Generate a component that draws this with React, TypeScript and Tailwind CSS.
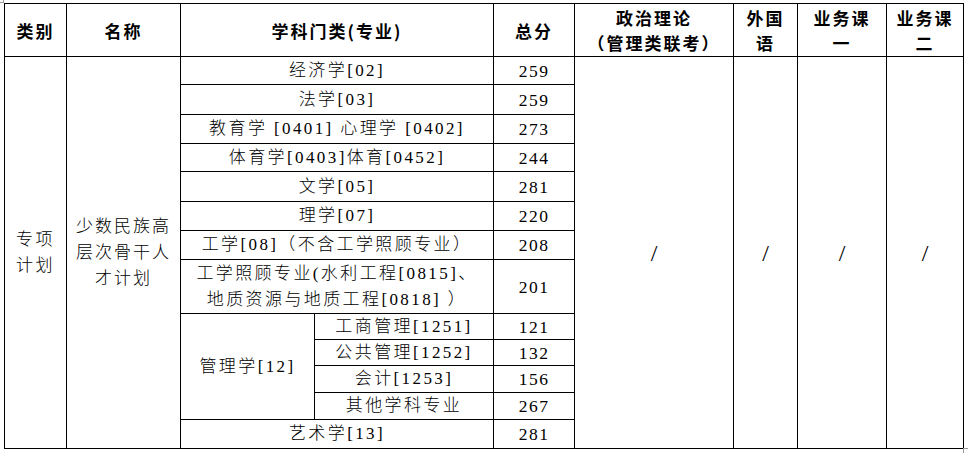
import React from "react";

const font = "font-[family-name:'Liberation_Serif','Noto_Sans_CJK_SC',serif]";

function Cell({
  area,
  children,
  className = "",
}: {
  area: string;
  children?: React.ReactNode;
  className?: string;
}) {
  return (
    <div
      className={`bg-white flex items-center justify-center text-center text-black ${className}`}
      style={{ gridArea: area }}
    >
      {children}
    </div>
  );
}

const subjects: { row: number; text: React.ReactNode; score: string }[] = [
  { row: 2, text: "经济学[02]", score: "259" },
  { row: 3, text: "法学[03]", score: "259" },
  { row: 4, text: "教育学 [0401] 心理学 [0402]", score: "273" },
  { row: 5, text: "体育学[0403]体育[0452]", score: "244" },
  { row: 6, text: "文学[05]", score: "281" },
  { row: 7, text: "理学[07]", score: "220" },
  { row: 8, text: "工学[08]（不含工学照顾专业）", score: "208" },
  {
    row: 9,
    text: (
      <>
        工学照顾专业(水利工程[0815]、
        <br />
        地质资源与地质工程[0818] ）
      </>
    ),
    score: "201",
  },
];

const mgmt: { row: number; text: string; score: string }[] = [
  { row: 10, text: "工商管理[1251]", score: "121" },
  { row: 11, text: "公共管理[1252]", score: "132" },
  { row: 12, text: "会计[1253]", score: "156" },
  { row: 13, text: "其他学科专业", score: "267" },
];

export default function App() {
  const head = "font-bold text-[17px] tracking-[2px] leading-[25px] font-[family-name:'Noto_Sans_CJK_SC',sans-serif]";
  const body = "font-light text-[17px] tracking-[2.4px] leading-[26px]";
  const num = "text-[17.5px] tracking-[1.5px] leading-[26px]";
  const slash = "font-[family-name:'Liberation_Serif',serif] text-[24px] text-[#777] leading-[26px]";
  return (
    <div className={`relative w-[968px] h-[453px] bg-white overflow-hidden pt-[3px] pl-[4px] ${font}`}>
      <div className="absolute left-0 top-[2px] w-[4px] h-px bg-[#999]" />
      <div className="absolute left-[3px] top-0 w-px h-[3px] bg-[#999]" />
      <div className="grid w-[960px] bg-black p-px gap-px grid-cols-[61px_113px_133px_178px_80px_158px_63px_88px_76px] grid-rows-[52px_27px_29px_28px_27px_29px_28px_28px_53px_25px_25px_26px_26px_28px]">
        <Cell area="1 / 1 / 2 / 2" className={head}>类别</Cell>
        <Cell area="1 / 2 / 2 / 3" className={head}>名称</Cell>
        <Cell area="1 / 3 / 2 / 5" className={`${head} tracking-[1px]`}>学科门类(专业)</Cell>
        <Cell area="1 / 5 / 2 / 6" className={head}>总分</Cell>
        <Cell area="1 / 6 / 2 / 7" className={head}>
          政治理论
          <br />
          （管理类联考）
        </Cell>
        <Cell area="1 / 7 / 2 / 8" className={head}>
          外国
          <br />语
        </Cell>
        <Cell area="1 / 8 / 2 / 9" className={head}>
          业务课
          <br />一
        </Cell>
        <Cell area="1 / 9 / 2 / 10" className={head}>
          业务课
          <br />二
        </Cell>

        <Cell area="2 / 1 / 15 / 2" className={body}>
          专项
          <br />
          计划
        </Cell>
        <Cell area="2 / 2 / 15 / 3" className={`${body} tracking-[2px] leading-[25.5px]`}>
          少数民族高
          <br />
          层次骨干人
          <br />
          才计划
        </Cell>

        {subjects.map((s) => (
          <React.Fragment key={s.row}>
            <Cell area={`${s.row} / 3 / ${s.row + 1} / 5`} className={body}>
              {s.text}
            </Cell>
            <Cell area={`${s.row} / 5 / ${s.row + 1} / 6`} className={num}>
              {s.score}
            </Cell>
          </React.Fragment>
        ))}

        <Cell area="10 / 3 / 14 / 4" className={body}>管理学[12]</Cell>
        {mgmt.map((s) => (
          <React.Fragment key={s.row}>
            <Cell area={`${s.row} / 4 / ${s.row + 1} / 5`} className={body}>
              {s.text}
            </Cell>
            <Cell area={`${s.row} / 5 / ${s.row + 1} / 6`} className={num}>
              {s.score}
            </Cell>
          </React.Fragment>
        ))}

        <Cell area="14 / 3 / 15 / 5" className={body}>艺术学[13]</Cell>
        <Cell area="14 / 5 / 15 / 6" className={num}>281</Cell>

        <Cell area="2 / 6 / 15 / 7" className={slash}>/</Cell>
        <Cell area="2 / 7 / 15 / 8" className={slash}>/</Cell>
        <Cell area="2 / 8 / 15 / 9" className={slash}>/</Cell>
        <Cell area="2 / 9 / 15 / 10" className={slash}>/</Cell>
      </div>
      <div className="absolute left-[963px] top-[448px] w-[5px] h-px bg-[#999]" />
      <div className="absolute left-[963px] top-[448px] w-px h-[5px] bg-[#999]" />
    </div>
  );
}
